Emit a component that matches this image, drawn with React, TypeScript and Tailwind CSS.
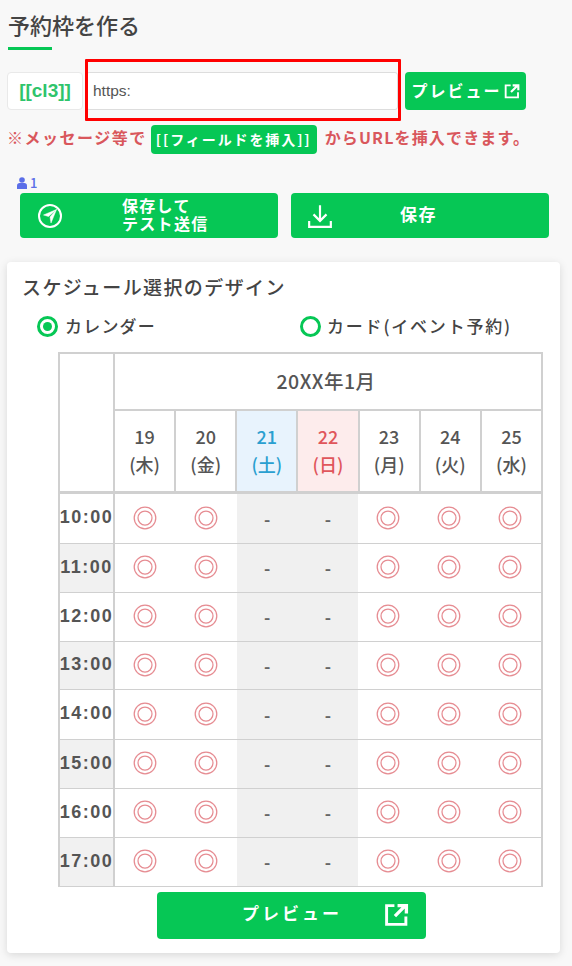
const F = "[font-family:'Noto_Sans_CJK_JP','Noto_Sans',sans-serif]";

function Ext({ s }: { s: number }) {
  return (
    <svg width={s} height={s} viewBox="0 0 24 24" fill="none" stroke="white" strokeWidth="2.8">
      <path d="M10 3.500H2.500V21.500H21V14" />
      <path d="M10.500 13.500 20 4M13 3.500H21.500V11" strokeWidth="3.200" />
    </svg>
  );
}

function Maru() {
  return (
    <svg className="mb-[2px] mr-[1px]" width="24" height="24" viewBox="0 0 24 24" fill="none" stroke="#e68c92" strokeWidth="1.250">
      <circle cx="12" cy="12" r="10.800" />
      <circle cx="12" cy="12" r="7" />
    </svg>
  );
}

const days = [
  ["19", "(木)", "", "text-[#555]"],
  ["20", "(金)", "", "text-[#555]"],
  ["21", "(土)", "bg-[#e8f3fd]", "text-[#2a9fd0]"],
  ["22", "(日)", "bg-[#fdecec]", "text-[#e0565b]"],
  ["23", "(月)", "", "text-[#555]"],
  ["24", "(火)", "", "text-[#555]"],
  ["25", "(水)", "", "text-[#555]"],
];
const rows: [string, number][] = [
  ["10:00", 50], ["11:00", 49], ["12:00", 49], ["13:00", 48],
  ["14:00", 50], ["15:00", 49], ["16:00", 49], ["17:00", 49],
];

export default function App() {
  return (
    <div className={`${F} h-[966px] w-[572px] overflow-hidden bg-[#f8f8f8] text-[#444]`}>
      <div className="pl-[8px] pt-[9px]">
        <h1 className="text-[22px] font-medium leading-[30px] text-[#444]">予約枠を作る</h1>
        <div className="mt-[8px] h-[3px] w-[44px] bg-[#06c755]" />
      </div>

      <div className="relative mt-[22px] flex h-[38px] items-stretch pl-[7px]">
        <div className="flex w-[76px] items-center justify-center rounded-[4px] border border-[#e9e9e9] bg-white font-['Liberation_Sans',sans-serif] text-[19px] font-bold text-[#2fc46c]">[[cl3]]</div>
        <div className="relative ml-[3px] flex w-[312px] items-center rounded-[3px] border border-[#ddd] bg-white pl-[6px] font-['Liberation_Sans',sans-serif] text-[15.500px] text-[#555]">
          https:
          <div className="absolute -bottom-[12px] -left-[2px] -right-[4px] -top-[14px] rounded-[1px] border-[3px] border-[#ff0000]" />
        </div>
        <div className="ml-[7px] flex w-[121px] items-center justify-center gap-[2px] rounded-[4px] bg-[#06c755] text-[16px] font-bold tracking-[2px] text-white">
          <span className="pb-[3px]">プレビュー</span><Ext s={16} />
        </div>
      </div>

      <div className="mt-[15px] flex h-[29px] items-center pl-[7px] text-[16px] font-bold tracking-[1.500px] text-[#d9575c]">
        <span className="pb-[5px]">※メッセージ等で</span>
        <span className="ml-[4px] flex h-[29px] w-[166px] items-center justify-center rounded-[4px] bg-[#06c755] text-[14px] tracking-[1.900px] text-white">[[フィールドを挿入]]</span>
        <span className="ml-[8px] pb-[5px] tracking-[1.150px]">からURLを挿入できます。</span>
      </div>

      <div className="mt-[22px] flex h-[14px] items-center gap-[3px] pl-[17px] text-[13px] font-medium text-[#5b6ee8]">
        <svg width="10" height="12" viewBox="0 0 10 12" fill="currentColor">
          <circle cx="5" cy="3" r="2.800" />
          <path d="M0 12V8.500C0 7 1.200 6 2.500 6h5C8.800 6 10 7 10 8.500V12z" />
        </svg>
        1
      </div>

      <div className="mt-[3px] flex gap-[13px] pl-[20px]">
        <div className="flex h-[45px] w-[258px] items-center rounded-[4px] bg-[#06c755] text-white">
          <svg className="ml-[17px]" width="26" height="26" viewBox="0 0 26 26" fill="none">
            <circle cx="13" cy="13" r="11" stroke="white" strokeWidth="2" />
            <path d="M19.500 6.500 6.500 12l5 1.500L19.500 6.500 13 14l1 6z" fill="white" stroke="white" strokeWidth="0.500" />
          </svg>
          <span className="ml-[59px] pb-[3px] text-[16px] font-bold leading-[18px] tracking-[1.300px]">保存して<br />テスト送信</span>
        </div>
        <div className="flex h-[45px] w-[258px] items-center rounded-[4px] bg-[#06c755] text-white">
          <svg className="ml-[16px]" width="26" height="26" viewBox="0 0 24 24" fill="none" stroke="white" strokeWidth="2">
            <path d="M12 2v14M6 10.500l6 6 6-6M2 16.500V22h20v-5.500" />
          </svg>
          <span className="ml-[67px] pb-[3px] text-[17px] font-bold tracking-[1.500px]">保存</span>
        </div>
      </div>

      <div className="ml-[7px] mt-[24px] h-[691px] w-[553px] rounded-[4px] bg-white pl-[16px] pt-[12px] shadow-[0_2px_8px_rgba(0,0,0,0.13)]">
        <h2 className="-ml-[1px] text-[19px] font-medium leading-[26px] tracking-[1.400px] text-[#444]">スケジュール選択のデザイン</h2>
        <div className="mt-[14px] flex h-[24px] items-center text-[17px] font-medium tracking-[1.200px] text-[#444]">
          <span className="ml-[14px] flex h-[21px] w-[21px] items-center justify-center rounded-full border-[3px] border-[#06c755]">
            <span className="h-[9px] w-[9px] rounded-full bg-[#06c755]" />
          </span>
          <span className="ml-[7px] w-[235px]">カレンダー</span>
          <span className="h-[21px] w-[21px] rounded-full border-[3px] border-[#06c755]" />
          <span className="ml-[6px] tracking-[1.800px]">カード(イベント予約)</span>
        </div>

        <div className="ml-[35px] mt-[14px] w-[485px] border-2 border-b border-[#d0d0d0]">
          <div className="flex">
            <div className="w-[55px] shrink-0 border-r-2 border-[#d0d0d0]" />
            <div className="flex-1">
              <div className="flex h-[57px] items-center justify-center border-b-2 border-[#d0d0d0] pb-[2px] pr-[4px] text-[19.500px] font-medium tracking-[0.500px] text-[#555]">20XX年1月</div>
              <div className="flex h-[80px]">
                {days.map((d, i) => (
                  <div key={d[0]} className={`flex flex-1 flex-col items-center justify-center pb-[2px] text-[18px] font-medium leading-[28px] ${d[2]} ${d[3]} ${i < 6 ? "border-r-2 border-[#d0d0d0]" : ""}`}>
                    <span>{d[0]}</span>
                    <span>{d[1]}</span>
                  </div>
                ))}
              </div>
            </div>
          </div>
          {rows.map(([t, h], r) => (
            <div key={t} className={`flex border-[#d0d0d0] ${r === 0 ? "border-t-[3px]" : "border-t"}`} style={{ height: r === 0 ? h + 2 : h }}>
              <div className={`flex w-[55px] shrink-0 items-center justify-center whitespace-nowrap border-r-2 border-[#d0d0d0] pb-[2px] font-['Liberation_Sans',sans-serif] text-[18px] font-bold tracking-[1.500px] text-[#555] ${r % 2 === 0 ? "bg-white" : "bg-[#f1f1f1]"}`}>{t}</div>
              <div className="flex flex-1">
                {days.map((d, i) => (
                  <div key={d[0]} className={`flex flex-1 items-center justify-center ${i === 2 || i === 3 ? "bg-[#f0f0f0] text-[17px] font-bold text-[#666]" : ""}`}>
                    {i === 2 || i === 3 ? "-" : <Maru />}
                  </div>
                ))}
              </div>
            </div>
          ))}
        </div>

        <div className="ml-[134px] mt-[5px] flex h-[47px] w-[269px] items-center rounded-[4px] bg-[#06c755] text-white">
          <span className="ml-[85px] pb-[5px] text-[17px] font-bold tracking-[3px]">プレビュー</span>
          <span className="ml-[42px] mb-[2px] flex"><Ext s={25} /></span>
        </div>
      </div>
    </div>
  );
}
